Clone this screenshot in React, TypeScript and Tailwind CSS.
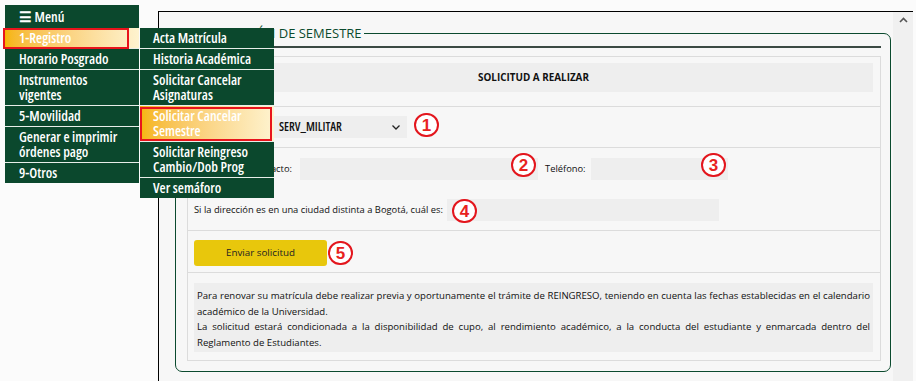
import React from "react";

const BASE = "font-['Open_Sans',sans-serif] [font-stretch:89%]";

function MItem({ children, last, pl = "pl-[14px]" }: { children: React.ReactNode; last?: boolean; pl?: string }) {
  return (
    <div className={`${pl} pr-1 pt-[2px] pb-[3px] leading-[15px] text-white whitespace-nowrap ${last ? "" : "border-b border-[#e8eee9]"}`}>
      {children}
    </div>
  );
}

function Badge({ n, x, y }: { n: number; x: number; y: number }) {
  return (
    <div
      className="absolute w-[25px] h-[24px] rounded-full border-[2.5px] border-[#e3161d] bg-white flex items-center justify-center font-['Liberation_Sans',sans-serif] [font-stretch:100%] font-bold text-[17px] leading-none text-[#e8231e]"
      style={{ left: x, top: y }}
    >
      {n}
    </div>
  );
}

export default function App() {
  return (
    <div className={`w-[916px] h-[381px] overflow-hidden relative bg-[#fbfbfb] flex ${BASE}`}>
      <div className="w-[158px] shrink-0" />
      <div className="mt-[11px] w-[755px] h-[400px] border-l border-t border-black bg-[#f7f7f7] flex">
        <div className="w-[734px] pl-[16px] pr-[2px] pt-[13px]">
          <fieldset className="border border-[#0b4a2e] rounded-[7px] pl-[11px] pr-[9px] pb-[10px] min-w-0">
            <legend className="ml-0 pr-[2px] text-[13px] leading-[16px] text-[#0b4a2e]">
              CANCELACIÓN DE SEMESTRE
            </legend>
            <div className="mt-[5px] border-t-2 border-[#3b4a44]" />
            <div className="mt-[8px] border border-[#dcdcdc] text-[9.35px] text-[#111]">
              <div className="pl-[6px] pr-[7px] pt-[6px] pb-[14px] border-b border-[#dcdcdc]">
                <div className="h-[29px] bg-[#eeeeee] flex items-center justify-center font-bold text-[9.9px]">
                  SOLICITUD A REALIZAR
                </div>
              </div>
              <div className="pl-[6px] pt-[9px] pb-[9px] border-b border-[#dcdcdc] flex items-center">
                <div className="w-[80px]">Motivo:</div>
                <div className="w-[133px] h-[22px] bg-[#eeeeee] pl-[5px] pr-[7px] flex items-center justify-between">
                  <span className="font-semibold text-[12px] [font-stretch:75%]">SERV_MILITAR</span>
                  <svg width="8" height="5" viewBox="0 0 8 5">
                    <polyline points="0.5,0.5 4,4 7.5,0.5" fill="none" stroke="#222" strokeWidth="1.3" />
                  </svg>
                </div>
              </div>
              <div className="pl-[6px] pt-[10px] pb-[9px] border-b border-[#dcdcdc]">
                <div className="flex items-center">
                  <div className="w-[98px] text-right whitespace-nowrap">Dirección de contacto:</div>
                  <div className="ml-[8px] w-[238px] h-[22px] bg-[#eeeeee]" />
                  <div className="ml-[7px]">Teléfono:</div>
                  <div className="ml-[5px] w-[137px] h-[22px] bg-[#eeeeee]" />
                </div>
                <div className="mt-[19px] flex items-center">
                  <div className="w-[253px] whitespace-nowrap">
                    Si la dirección es en una ciudad distinta a Bogotá, cuál es:
                  </div>
                  <div className="w-[272px] h-[22px] bg-[#eeeeee]" />
                </div>
              </div>
              <div className="pl-[6px] pt-[9px] pb-[6px] border-b border-[#dcdcdc]">
                <div className="w-[133px] h-[26px] bg-[#e8c70c] rounded-[3px] flex items-center justify-center text-[9.8px] text-[#222]">
                  Enviar solicitud
                </div>
              </div>
              <div className="pl-[6px] pr-[7px] pt-[10px] pb-[8px]">
                <div className="bg-[#eeeeee] px-[3px] pt-[5px] pb-[2px] leading-[15.5px] text-[9.6px]">
                  <div className="text-justify [text-align-last:justify]">
                    Para renovar su matrícula debe realizar previa y oportunamente el trámite de REINGRESO, teniendo en cuenta las fechas establecidas en el calendario
                  </div>
                  <div>académico de la Universidad.</div>
                  <div className="text-justify [text-align-last:justify]">
                    La solicitud estará condicionada a la disponibilidad de cupo, al rendimiento académico, a la conducta del estudiante y enmarcada dentro del
                  </div>
                  <div>Reglamento de Estudiantes.</div>
                </div>
              </div>
            </div>
          </fieldset>
        </div>
        <div className="w-[20px] bg-[#f0f0f0] flex justify-center pt-[5px]">
          <svg width="9" height="6" viewBox="0 0 9 6">
            <polyline points="1,5 4.5,1.5 8,5" fill="none" stroke="#555" strokeWidth="1.6" />
          </svg>
        </div>
      </div>

      {/* Main menu */}
      <div className="absolute left-[5px] top-[5px] w-[134px] bg-[#0b482d] text-[14px] font-semibold [font-stretch:75%]">
        <div className="h-[23px] pl-[14px] flex items-center text-white leading-none">☰ Menú</div>
        <div className="bg-linear-to-r from-[#f6b500] to-[#fef3cf]">
          <MItem>1-Registro</MItem>
        </div>
        <MItem>Horario Posgrado</MItem>
        <MItem>
          Instrumentos
          <br />
          vigentes
        </MItem>
        <MItem>5-Movilidad</MItem>
        <MItem>
          Generar e imprimir
          <br />
          órdenes pago
        </MItem>
        <MItem last>9-Otros</MItem>
      </div>

      {/* Sub menu */}
      <div className="absolute left-[140px] top-[28px] w-[134px] bg-[#0b482d] text-[14px] font-semibold [font-stretch:75%]">
        <MItem pl="pl-[13px]">Acta Matrícula</MItem>
        <MItem pl="pl-[13px]">Historia Académica</MItem>
        <MItem pl="pl-[13px]">
          Solicitar Cancelar
          <br />
          Asignaturas
        </MItem>
        <div className="bg-linear-to-r from-[#f6b500] to-[#fef3cf]">
          <MItem pl="pl-[13px]">
            Solicitar Cancelar
            <br />
            Semestre
          </MItem>
        </div>
        <MItem pl="pl-[13px]">
          Solicitar Reingreso
          <br />
          Cambio/Dob Prog
        </MItem>
        <MItem pl="pl-[13px]" last>Ver semáforo</MItem>
      </div>

      {/* Highlight boxes */}
      <div className="absolute left-[3px] top-[28px] w-[126px] h-[21px] border-2 border-[#e8141c]" />
      <div className="absolute left-[140px] top-[107px] w-[132px] h-[34px] border-2 border-[#e8141c]" />

      <Badge n={1} x={414} y={113} />
      <Badge n={2} x={511} y={153} />
      <Badge n={3} x={701} y={153} />
      <Badge n={4} x={452} y={199} />
      <Badge n={5} x={328} y={241} />
    </div>
  );
}
